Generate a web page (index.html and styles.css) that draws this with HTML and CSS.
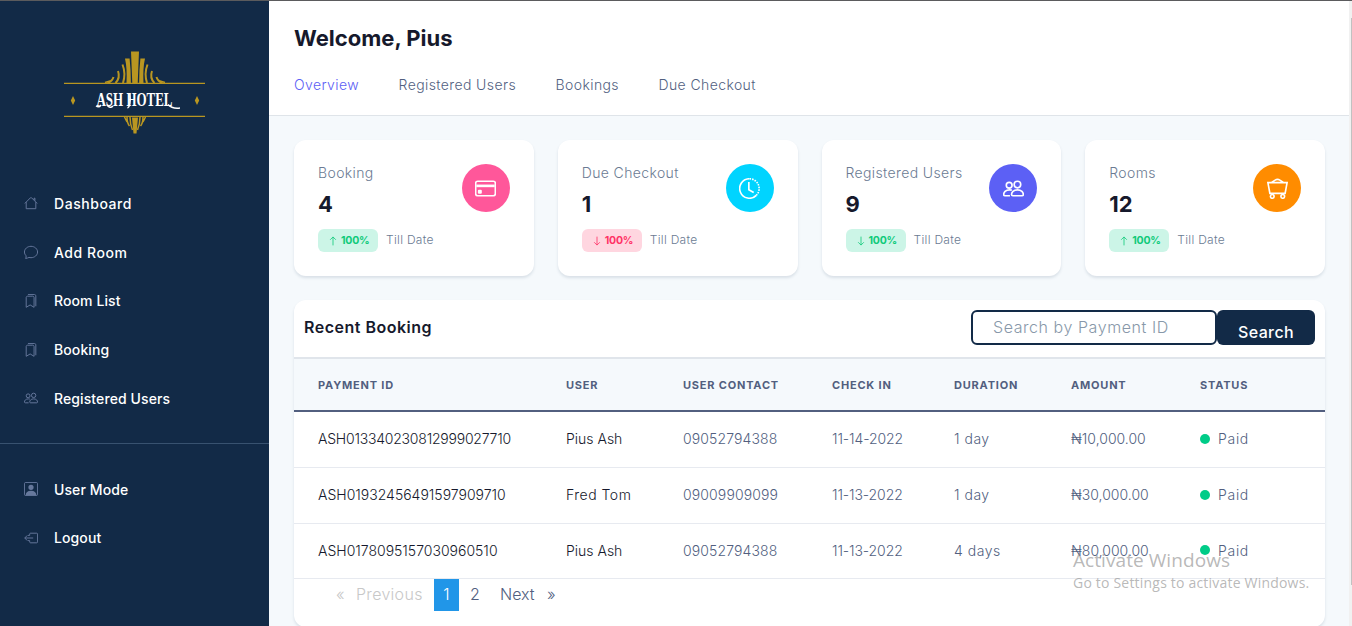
FILE: index.html
```html
<!DOCTYPE html>
<html lang="en">
<head>
<meta charset="utf-8">
<title>Ash Hotel Dashboard</title>
<link rel="stylesheet" href="styles.css">
</head>
<body>
<svg class="defs" aria-hidden="true">
  <defs>
    <symbol id="house" viewBox="0 0 16 16"><path d="M2.5 7v7.5h11V7M.9 8.5 7.4 2a.9.9 0 0 1 1.2 0l6.5 6.5M11.5 4.5v-2h1v3"/></symbol>
    <symbol id="chat" viewBox="0 0 16 16"><path d="M2.3 12.2C1.200 11.100.5 9.600.5 8c0-3.600 3.400-6.500 7.500-6.500s7.500 2.900 7.500 6.500-3.400 6.500-7.500 6.500c-.8 0-1.600-.1-2.300-.3-.8.4-2 .9-3.800 1.200.5-1.200.8-2.200.4-3.200z"/></symbol>
    <symbol id="bookmarks" viewBox="0 0 16 16"><path d="M2.500 15.200V4c0-.8.7-1.500 1.500-1.500h6c.8 0 1.500.7 1.500 1.500v11.200L7 12.500zM4.500.5H12c.8 0 1.500.7 1.500 1.500v12"/></symbol>
    <symbol id="people" viewBox="0 0 16 16"><circle cx="11" cy="5" r="2.500"/><path d="M7.500 13.500h7c.6 0 1-.4 1-1 0-1.500-1.400-3.500-4.500-3.500s-4.500 2-4.500 3.500c0 .6.400 1 1 1zM5.300 13.500H1.500c-.6 0-1-.4-1-1C.5 11 1.900 9 5 9c.6 0 1.200.1 1.700.2"/><circle cx="4.700" cy="5.500" r="2.200"/></symbol>
    <symbol id="person" viewBox="0 0 16 16"><rect x=".5" y=".5" width="15" height="15" rx="1.500"/><path class="solid" d="M8 9a3 3 0 1 0 0-6 3 3 0 0 0 0 6zM2 15v-1c0-1.500 2-4 6-4s6 2.500 6 4v1z"/></symbol>
    <symbol id="logout" viewBox="0 0 16 16"><path d="M4.500 5h2V3.500c0-.6.400-1 1-1h7c.6 0 1 .4 1 1v9c0 .6-.4 1-1 1h-7c-.6 0-1-.4-1-1V11h-2M3.800 5 .8 8l3 3M1 8h9.500"/></symbol>
    <symbol id="card" viewBox="0 0 16 16"><rect x=".5" y="2.500" width="15" height="11" rx="1.500"/><path class="solid" d="M1 5h14v2H1z"/><rect class="solid" x="2.200" y="9" width="3" height="3" rx=".8"/></symbol>
    <symbol id="clock" viewBox="0 0 16 16"><path d="M8 .6a7.400 7.400 0 1 0 5.200 12.600M7.500 3v6l3.700 2.100"/><path d="M8 .6a7.400 7.400 0 0 1 5.200 12.600" stroke-dasharray="1.200 .8"/></symbol>
    <symbol id="cart" viewBox="0 0 16 16"><path d="M.7 3.500h14.600l-1.500 8.200H2.200zM3.500 3.300 6.500 1.400c.6-.5 2.400-.5 3 0l3 1.900"/><circle cx="4" cy="14" r="1.400"/><circle cx="12" cy="14" r="1.400"/></symbol>
    <symbol id="up" viewBox="0 0 16 16"><path d="M8 15V1.500M3.500 6 8 1.500 12.500 6"/></symbol>
    <symbol id="down" viewBox="0 0 16 16"><path d="M8 1v13.500M3.500 10l4.500 4.500 4.500-4.500"/></symbol>
  </defs>
</svg>
<div class="app">
  <aside class="sidebar">
    <svg class="logo" viewBox="0 0 142 84">
      <g fill="#b99621">
        <path d="M67 .5h8l-1.300 32h-5.400zM61 7.500h4.600q1.300 11 1.300 25h-4.400q.8-15-1.500-25zM81 7.500h-4.600q-1.300 11-1.300 25h4.400q-.8-15 1.500-25z"/>
        <path d="M74 66.500l-1.500 16h-3L68 66.500z"/>
      </g>
      <path d="M0 32.400h141M0 65.400h141" stroke="#b99621" stroke-width="1.400"/>
      <g fill="none" stroke="#b99621" stroke-width="2">
        <path d="M58.500 13.500q3.500 9 .5 18.500M54 20q2.500 7-2.500 12M49.500 26q-1 4-6 6M83.500 13.500q-3.500 9-.5 18.500M88 20q-2.500 7 2.500 12M92.500 26q1 4 6 6"/>
        <path stroke-width="1.500" d="M66 66q0 7 2.500 13M63 66q0 6 2.500 9M60.500 66l2.500 5M76 66q0 7-2.500 13M79 66q0 6-2.500 9M81.500 66 79 71M41 31.500l5-1.500M101 31.500l-5-1.500"/>
      </g>
      <path fill="#b99621" d="M9 45l2.200 4.500L9 54l-2.200-4.500zM133 45l2.200 4.500L133 54l-2.200-4.500z"/>
      <text class="logo-text" x="32.500" y="55" textLength="76" lengthAdjust="spacingAndGlyphs">ASH HOTEL</text>
      <path fill="none" stroke="#fff" stroke-width="1.500" d="M104 53.500q4 4.500 12 3.500M37 54q-2 3-5 1M43 54q3 4 6 1M66 43q1 13-2.500 14"/>
    </svg>
    <nav class="menu">
      <a class="wide"><svg class="icon"><use href="#house"/></svg><span>Dashboard</span></a>
      <a class="wide"><svg class="icon"><use href="#chat"/></svg><span>Add Room</span></a>
      <a><svg class="icon"><use href="#bookmarks"/></svg><span>Room List</span></a>
      <a><svg class="icon"><use href="#bookmarks"/></svg><span>Booking</span></a>
      <a><svg class="icon"><use href="#people"/></svg><span>Registered Users</span></a>
    </nav>
    <nav class="menu account">
      <a><svg class="icon"><use href="#person"/></svg><span>User Mode</span></a>
      <a><svg class="icon"><use href="#logout"/></svg><span>Logout</span></a>
    </nav>
  </aside>
  <main class="main">
    <header class="header">
      <h1>Welcome, Pius</h1>
      <nav class="tabs"><a class="active">Overview</a><a>Registered Users</a><a>Bookings</a><a>Due Checkout</a></nav>
    </header>
    <section class="cards">
      <article class="card"><div class="info"><p class="label">Booking</p><p class="value">4</p><p class="trend"><span class="badge"><svg class="arrow"><use href="#up"/></svg>100%</span><span>Till Date</span></p></div><div class="circle pink"><svg class="icon"><use href="#card"/></svg></div></article>
      <article class="card"><div class="info"><p class="label">Due Checkout</p><p class="value">1</p><p class="trend"><span class="badge danger"><svg class="arrow"><use href="#down"/></svg>100%</span><span>Till Date</span></p></div><div class="circle cyan"><svg class="icon"><use href="#clock"/></svg></div></article>
      <article class="card"><div class="info"><p class="label">Registered Users</p><p class="value">9</p><p class="trend"><span class="badge"><svg class="arrow"><use href="#down"/></svg>100%</span><span>Till Date</span></p></div><div class="circle violet"><svg class="icon"><use href="#people"/></svg></div></article>
      <article class="card"><div class="info"><p class="label">Rooms</p><p class="value">12</p><p class="trend"><span class="badge"><svg class="arrow"><use href="#up"/></svg>100%</span><span>Till Date</span></p></div><div class="circle orange"><svg class="icon"><use href="#cart"/></svg></div></article>
    </section>
    <section class="panel">
      <div class="panel-head">
        <h2>Recent Booking</h2>
        <form class="search"><div class="field">Search by Payment ID</div><div class="button">Search</div></form>
      </div>
      <div class="row head"><span>PAYMENT ID</span><span>USER</span><span>USER CONTACT</span><span>CHECK IN</span><span>DURATION</span><span>AMOUNT</span><span>STATUS</span></div>
      <div class="row"><span class="dark tight">ASH013340230812999027710</span><span class="dark">Pius Ash</span><span class="num">09052794388</span><span class="date">11-14-2022</span><span class="loose">1 day</span><span>₦10,000.00</span><span class="paid">Paid</span></div>
      <div class="row"><span class="dark">ASH01932456491597909710</span><span class="dark loose">Fred Tom</span><span class="num">09009909099</span><span class="date">11-13-2022</span><span class="loose">1 day</span><span>₦30,000.00</span><span class="paid">Paid</span></div>
      <div class="row"><span class="dark">ASH0178095157030960510</span><span class="dark">Pius Ash</span><span class="num">09052794388</span><span class="date">11-13-2022</span><span class="loose">4 days</span><span>₦80,000.00</span><span class="paid">Paid</span></div>
      <div class="pager"><span class="muted quote">«</span><span class="muted previous">Previous</span><span class="current">1</span><span class="two">2</span><span class="next">Next</span><span class="quote">»</span></div>
    </section>
  </main>
  <div class="scrollbar"><div class="thumb"></div></div>
  <div class="watermark"><p class="big">Activate Windows</p><p class="small">Go to Settings to activate Windows.</p></div>
</div>
</body>
</html>
```
FILE: styles.css
```css
* { box-sizing: border-box; margin: 0; }
body { height: 626px; overflow: hidden; font-family: Inter, "Open Sans", sans-serif; font-size: 14px; font-weight: 300; color: #525f7f; }
.defs { position: absolute; width: 0; height: 0; }
.app { position: relative; display: flex; height: 626px; border-top: 1px solid #5b5b5d; background: #f5f9fc; }
.icon, .arrow { fill: none; stroke: currentColor; stroke-width: 1; }
.solid { fill: currentColor; stroke: none; }

.sidebar { flex: none; width: 269px; background: #122a47; color: #fff; }
.logo { display: block; width: 142px; height: 84px; margin: 50px 0 0 64px; }
.logo-text { font: bold 18px "Liberation Serif", serif; fill: #fff; }
.menu { display: flex; flex-direction: column; padding: 44px 0 20px; }
.menu a { display: flex; align-items: center; gap: 16px; height: 48.75px; padding-left: 24px; font-weight: 500; letter-spacing: 0.1px; }
.menu .wide { letter-spacing: 0.55px; }
.menu .icon { width: 14px; height: 14px; color: #66789c; stroke-width: 1.100; }
.account { border-top: 1px solid #385270; padding-top: 21px; }

.main { flex: none; width: 1080px; }
.header { height: 115px; padding: 22px 25px 0; background: #fff; border-bottom: 1px solid #dfe4e9; }
h1 { font-size: 22px; line-height: 30px; font-weight: 700; color: #16192c; letter-spacing: 0; }
.tabs { display: flex; gap: 39.500px; margin-top: 21px; line-height: 21px; letter-spacing: 0.4px; }
.tabs .active { color: #5c60f5; }

.cards { display: grid; grid-template-columns: repeat(4, 1fr); gap: 24px; padding: 24px 24px 24px 25px; }
.card { display: flex; justify-content: space-between; height: 136px; padding: 24px; background: #fff; border-radius: 12px; box-shadow: 0 2px 3px rgba(30, 60, 90, .13); white-space: nowrap; }
.info { width: 130px; }
.label { line-height: 18px; color: #6b7b93; letter-spacing: 0.37px; }
.value { margin-top: 6px; font-size: 22px; line-height: 33px; font-weight: 700; color: #16192c; }
.trend { display: flex; align-items: center; gap: 8px; margin-top: 8px; font-size: 12px; color: #6b7b93; letter-spacing: 0.3px; line-height: 14px; }
.trend > span:last-child { padding-bottom: 1px; }
.badge { display: flex; align-items: center; gap: 3px; width: 60px; height: 23px; padding-left: 10px; border-radius: 6px; background: #ccf5e7; color: #0fca7a; font-size: 10.500px; font-weight: 700; letter-spacing: -0.2px; }
.badge.danger { background: #ffd6e0; color: #ff3366; }
.arrow { width: 10px; height: 10px; stroke-width: 1.300; }
.circle { display: flex; flex: none; align-items: center; justify-content: center; width: 48px; height: 48px; border-radius: 50%; color: #fff; }
.circle .icon { width: 21px; height: 21px; stroke-width: 1.250; }
.pink { background: #ff579a; }
.cyan { background: #00d4ff; }
.violet { background: #5c60f5; }
.orange { background: #ff8c00; }

.panel { height: 327px; margin: 0 24px 0 25px; background: #fff; border-radius: 12px; box-shadow: 0 2px 3px rgba(30, 60, 90, .13); }
.panel-head { display: flex; justify-content: space-between; height: 59px; padding: 10px; border-bottom: 2px solid #e0e5eb; }
h2 { font-size: 16px; line-height: 35px; font-weight: 600; color: #16192c; letter-spacing: 0.5px; }
.search { display: flex; font-size: 16px; }
.field { width: 246px; height: 35px; padding-left: 20px; border: 2px solid #122a47; border-radius: 6px; line-height: 31px; color: #8898a9; letter-spacing: 0.56px; }
.button { width: 98px; height: 35px; padding-top: 5px; border-radius: 6px; background: #122a47; color: #fff; line-height: 35px; text-align: center; font-weight: 500; letter-spacing: 0.4px; }
.row { display: grid; grid-template-columns: 248px 117px 149px 122px 117px 129px 149px; align-items: center; height: 55.8px; border-bottom: 1px solid #e7eaf0; white-space: nowrap; }
.row > span { padding: 0 0 1px 24px; }
.row.head { height: 53px; background: #f5f9fc; border-bottom: 2px solid #525f7f; font-size: 11px; font-weight: 700; letter-spacing: 0.8px; }
.row.head > span { padding-bottom: 0; }
.dark { color: #16192c; }
.tight { letter-spacing: -0.22px; }
.num { letter-spacing: 0.12px; }
.date { letter-spacing: -0.1px; }
.loose { letter-spacing: 0.5px; }
.paid { display: flex; align-items: center; gap: 8px; letter-spacing: 0.7px; }
.paid::before { content: ""; width: 10px; height: 10px; border-radius: 50%; background: #00cc88; }
.pager { display: flex; padding-left: 42px; font-size: 16px; line-height: 31px; height: 32px; }
.muted { color: #c8c8c8; }
.previous { width: 78px; margin-left: 11px; letter-spacing: 0.3px; }
.quote { width: 9px; }
.current { width: 25px; background: #2196e8; color: #fff; text-align: center; }
.two { width: 41px; padding-left: 11px; }
.next { width: 47px; }

.scrollbar { width: 3px; padding: 17px 0 0 2px; background: #f1f1f1; }
.thumb { height: 567px; background: #c1c1c1; }
.watermark { position: absolute; left: 1073px; top: 547px; color: rgba(145, 145, 145, .65); font-family: "Open Sans", sans-serif; font-weight: 400; white-space: nowrap; }
.big { font-size: 19px; line-height: 25px; letter-spacing: 0.07px; }
.small { font-size: 14px; line-height: 20px; letter-spacing: 0.2px; }
```
